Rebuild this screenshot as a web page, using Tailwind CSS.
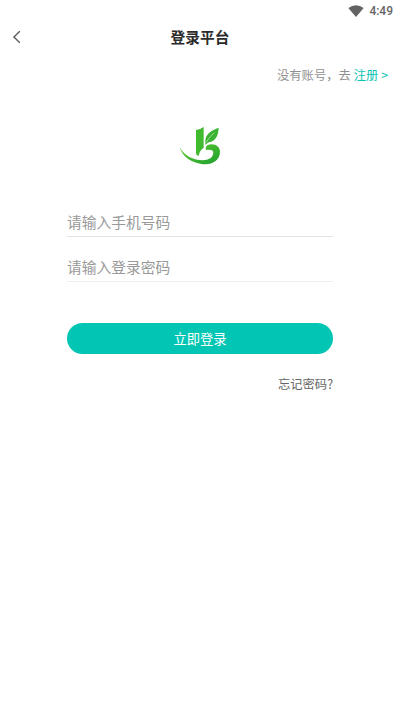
<!DOCTYPE html>
<html lang="zh-CN">
<head>
<meta charset="utf-8">
<meta name="viewport" content="width=device-width, initial-scale=1">
<title>登录平台</title>
<script src="https://cdn.jsdelivr.net/npm/@tailwindcss/browser@4"></script>
</head>
<body class="bg-white">
<div class="flex h-[710px] w-[400px] flex-col overflow-hidden bg-white font-['Noto_Sans_CJK_SC',sans-serif]">
  <div class="flex h-[21px] shrink-0 items-center justify-end gap-[5px] pr-[7px]">
    <svg class="h-[12px] w-[16px]" viewBox="0 0 16 12"><path d="M.3 3.1Q8-2.5 15.7 3.1L8 12Z" fill="#636363"/></svg>
    <span class="font-[Roboto,sans-serif] text-[12px] leading-none font-medium text-[#666]">4:49</span>
  </div>
  <header class="grid h-[31px] shrink-0 grid-cols-[60px_1fr_60px] items-center">
    <button class="flex pl-[12px]" aria-label="返回">
      <svg class="h-[14px] w-[9px]" viewBox="0 0 9 14" fill="none" stroke="#555" stroke-width="1.3"><path d="M7.8 1.3 1.9 7l5.9 5.7"/></svg>
    </button>
    <h1 class="text-center text-[14.7px] leading-[22px] font-bold text-[#2b2b2b]">登录平台</h1>
  </header>
  <div class="mt-px flex h-[44px] shrink-0 items-center justify-end pr-[12px] text-[12.3px] text-[#919191]">
    <span>没有账号，去</span><a class="ml-[3px] text-[#0bc3b2]">注册 &gt;</a>
  </div>
  <main class="flex flex-col px-[67px] pt-[18px]">
    <svg class="h-[60px] w-[60px] self-center" viewBox="0 0 180 180">
      <defs><linearGradient id="g" x1="0" y1="0" x2="1" y2="1"><stop offset="0" stop-color="#62cc2b"/><stop offset="1" stop-color="#1e9f32"/></linearGradient></defs>
      <path d="M29 96C40 117 59 130 82 134C111 139 129 130 130 113C130 106 124 103 108 105Q105 96 113 90C132 83 151 93 150 112C149 137 125 152 94 147C60 141 37 124 29 96Z" fill="url(#g)"/>
      <path d="M78 45Q90 44 101 36L101 99Q89 106 86 122Q78 121 78 113Z" fill="#42ba30"/>
      <path d="M107 90C102 62 115 50 146 38C145 66 134 78 117 82Q111 84 107 90Z" fill="#3bb332"/>
      <path d="M109 82Q117 66 133 53" fill="none" stroke="#c8edbd" stroke-width="2"/>
    </svg>
    <div class="mt-[33px] flex h-[29px] items-center border-b border-[#e4e4e4] text-[14.75px] text-[#999]">请输入手机号码</div>
    <div class="mt-[16px] flex h-[29px] items-center border-b border-[#eee] text-[14.75px] text-[#999]">请输入登录密码</div>
    <button class="mt-[41px] flex h-[31px] items-center justify-center rounded-full bg-[#02c6b3] text-[13.3px] text-white">立即登录</button>
    <a class="mt-[20px] self-end text-[12.3px] leading-[20px] text-[#666]">忘记密码?</a>
  </main>
</div>
</body>
</html>
